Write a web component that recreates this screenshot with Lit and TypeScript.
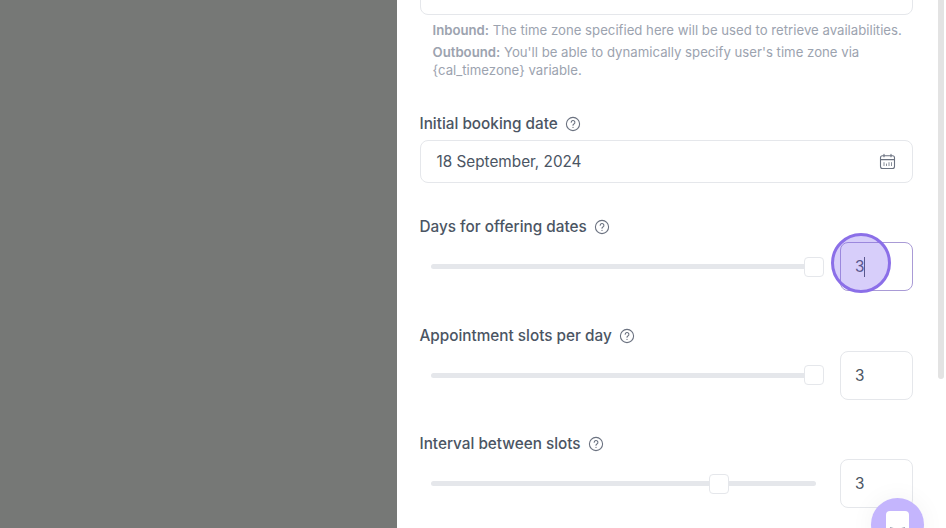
import { css, html, LitElement } from "lit";
import { customElement } from "lit/decorators.js";

const helpIcon = html`<svg class="help" viewBox="0 0 16 16" fill="none" stroke="currentColor" stroke-width="1.1" stroke-linecap="round">
  <circle cx="8" cy="8" r="6.6"></circle>
  <path d="M6.2 6.3a1.85 1.85 0 1 1 2.7 1.65c-.55.3-.9.7-.9 1.35"></path>
  <path d="M8 11.3v.1"></path>
</svg>`;

@customElement("app-root")
export class AppRoot extends LitElement {
  static styles = css`
    :host {
      display: flex;
      width: 946px;
      height: 528px;
      overflow: hidden;
      position: relative;
      font-family: Inter, "Liberation Sans", sans-serif;
      color: #4b5563;
    }
    .backdrop {
      width: 396.5px;
      flex: none;
      background: #767876;
    }
    .panel {
      flex: 1;
      background: #fff;
      display: flex;
      min-width: 0;
    }
    .content {
      flex: 1;
      min-width: 0;
      height: 528px;
      overflow: hidden;
      padding: 0 25px 0 23px;
    }
    .top-input {
      height: 29px;
      margin-top: -16px;
      border: 1px solid #e5e7eb;
      border-radius: 8px;
    }
    .notes {
      margin: 6px 0 0;
      padding-left: 13px;
      font-size: 13.2px;
      line-height: 18px;
      color: #9ca3af;
    }
    .notes p {
      margin: 0 0 4px;
    }
    .notes b {
      font-weight: 600;
    }
    .label {
      display: flex;
      align-items: center;
      gap: 7px;
      font-size: 15.3px;
      font-weight: 500;
      line-height: 20px;
      color: #4b5563;
    }
    .help {
      width: 16px;
      height: 16px;
      color: #6b7280;
    }
    .date-label {
      margin-top: 35px;
    }
    .date {
      margin-top: 6px;
      height: 41px;
      border: 1px solid #e5e7eb;
      border-radius: 8px;
      display: flex;
      align-items: center;
      justify-content: space-between;
      padding: 0 16px;
      font-size: 15.3px;
    }
    .cal {
      width: 17px;
      height: 17px;
      color: #6b7280;
    }
    .field {
      margin-top: 34px;
    }
    .field + .field {
      margin-top: 34.5px;
    }
    .row {
      display: flex;
      align-items: center;
      gap: 16px;
      margin-top: 5px;
    }
    .slider {
      flex: 1;
      position: relative;
      height: 20px;
      margin-left: 11px;
      display: flex;
      align-items: center;
    }
    .track {
      flex: 1;
      height: 5px;
      margin-right: 8px;
      border-radius: 3px;
      background: #e5e7eb;
    }
    .thumb {
      position: absolute;
      top: 0;
      width: 20px;
      height: 20px;
      box-sizing: border-box;
      background: #fff;
      border: 1px solid #e5e7eb;
      border-radius: 4px;
    }
    .num {
      width: 73px;
      height: 49px;
      box-sizing: border-box;
      border: 1px solid #e5e7eb;
      border-radius: 8px;
      display: flex;
      align-items: center;
      padding-left: 14px;
      font-size: 15.3px;
    }
    .num.focus {
      border-color: #a99bd6;
    }
    .caret {
      width: 1px;
      height: 20px;
      background: #4b5563;
    }
    .highlight {
      position: absolute;
      left: 831px;
      top: 233px;
      width: 60px;
      height: 60px;
      box-sizing: border-box;
      border: 3px solid #8b6fe8;
      border-radius: 50%;
      background: rgba(124, 92, 240, 0.3);
    }
    .scrollbar {
      width: 8px;
      flex: none;
      background: #fff;
      padding: 0 2px 0 0;
      box-sizing: border-box;
    }
    .scrollbar div {
      height: 379px;
      border-radius: 0 0 3px 3px;
      background: #e3e3e3;
    }
    .launcher {
      position: absolute;
      left: 871px;
      top: 498px;
      width: 53px;
      height: 53px;
      border-radius: 50%;
      background: #c4b5fd;
      box-shadow: 0 0 24px rgba(0, 0, 0, 0.05);
      display: flex;
      justify-content: center;
      padding-top: 13px;
      box-sizing: border-box;
    }
    .launcher div {
      width: 23px;
      height: 24px;
      background: #fff;
      border-radius: 4px;
    }
    .launcher svg {
      display: block;
      width: 23px;
      height: 24px;
    }
  `;

  renderField(label: string, pos: number, focus = false) {
    return html`<div class="field">
      <div class="label">${label} ${helpIcon}</div>
      <div class="row">
        <div class="slider">
          <div class="track"></div>
          <div class="thumb" style="left:${pos}px"></div>
        </div>
        <div class="num ${focus ? "focus" : ""}">3${focus ? html`<span class="caret"></span>` : ""}</div>
      </div>
    </div>`;
  }

  render() {
    return html`<div class="backdrop"></div>
      <div class="panel">
        <div class="content">
          <div class="top-input"></div>
          <div class="notes">
            <p><b>Inbound:</b> The time zone specified here will be used to retrieve availabilities.</p>
            <p><b>Outbound:</b> You'll be able to dynamically specify user's time zone via {cal_timezone} variable.</p>
          </div>
          <div class="label date-label">Initial booking date ${helpIcon}</div>
          <div class="date">
            <span>18 September, 2024</span>
            <svg class="cal" viewBox="0 0 17 17" fill="none" stroke="currentColor" stroke-width="1.1" stroke-linecap="round">
              <rect x="1.5" y="2.8" width="14" height="12.7" rx="2"></rect>
              <path d="M1.5 6.6h14M5 1.2v2.6M12 1.2v2.6"></path>
              <path d="M5 9.6v3M7.5 11v1.6M10 9.6v3M12.5 9.6v3" stroke-width=".8"></path>
            </svg>
          </div>
          ${this.renderField("Days for offering dates", 373, true)}
          ${this.renderField("Appointment slots per day", 373)}
          ${this.renderField("Interval between slots", 278)}
        </div>
        <div class="scrollbar"><div></div></div>
      </div>
      <div class="highlight"></div>
      <div class="launcher"><div>
        <svg viewBox="0 0 23 24" fill="none" stroke="#9ca3af" stroke-width="1.2"><path d="M4 16.5q7.5 3 15 0"></path></svg>
      </div></div>`;
  }
}
